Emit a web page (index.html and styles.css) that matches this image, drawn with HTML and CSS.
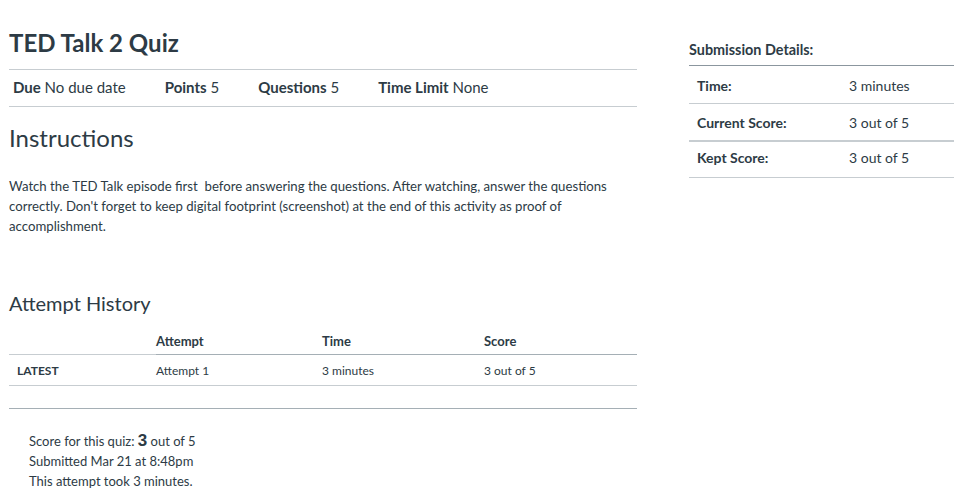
FILE: index.html
```html
<!DOCTYPE html>
<html lang="en">
<head>
<meta charset="utf-8">
<title>TED Talk 2 Quiz</title>
<link rel="stylesheet" href="styles.css">
</head>
<body>
<div class="page">
  <main class="main">
    <h1 class="title">TED Talk 2 Quiz</h1>
    <ul class="details">
      <li><span class="label">Due</span> No due date</li>
      <li><span class="label">Points</span> 5</li>
      <li><span class="label">Questions</span> 5</li>
      <li><span class="label">Time Limit</span> None</li>
    </ul>
    <h2 class="instr-title">Instructions</h2>
    <p class="instr">Watch the TED Talk episode first&nbsp; before answering the questions. After watching, answer the questions correctly. Don't forget to keep digital footprint (screenshot) at the end of this activity as proof of accomplishment.</p>

    <h2 class="history-title">Attempt History</h2>
    <table class="history">
      <thead>
        <tr><th class="blank"></th><th>Attempt</th><th>Time</th><th>Score</th></tr>
      </thead>
      <tbody>
        <tr><td class="latest">LATEST</td><td>Attempt 1</td><td>3 minutes</td><td>3 out of 5</td></tr>
      </tbody>
    </table>
    <div class="spacer"></div>

    <div class="summary">
      <div>Score for this quiz: <span class="big">3</span> out of 5</div>
      <div>Submitted Mar 21 at 8:48pm</div>
      <div>This attempt took 3 minutes.</div>
    </div>
  </main>

  <aside class="side">
    <h3 class="side-title">Submission Details:</h3>
    <table class="subm">
      <tr class="r1"><th>Time:</th><td>3 minutes</td></tr>
      <tr class="r2"><th>Current Score:</th><td>3 out of 5</td></tr>
      <tr class="r3"><th>Kept Score:</th><td>3 out of 5</td></tr>
    </table>
  </aside>
</div>
</body>
</html>
```

FILE: styles.css
```css
html, body {
  margin: 0;
  padding: 0;
  background: #ffffff;
}
body {
  font-family: Lato, "Open Sans", "Liberation Sans", sans-serif;
  color: #2d3b45;
}
.page {
  display: flex;
  align-items: flex-start;
  padding: 29px 0 0 9px;
}
.main {
  width: 628px;
}
.title {
  margin: 0 0 12px;
  font-size: 24px;
  line-height: 28px;
  font-weight: 700;
}
.details {
  list-style: none;
  margin: 0;
  padding: 7px 0 9px 4px;
  display: flex;
  gap: 39px;
  border-top: 1px solid #c7cdd1;
  border-bottom: 1px solid #c7cdd1;
  font-size: 15px;
  line-height: 20px;
}
.label {
  font-weight: 700;
}
.instr-title {
  margin: 17px 0 0;
  font-size: 24px;
  line-height: 28px;
  font-weight: 400;
}
.instr {
  margin: 24px 0 0;
  font-size: 13.2px;
  line-height: 20px;
}
.history-title {
  margin: 55px 0 0;
  font-size: 20px;
  line-height: 24px;
  font-weight: 400;
}
.history {
  margin-top: 12px;
  width: 100%;
  border-collapse: collapse;
  font-size: 12px;
}
.history th {
  text-align: left;
  font-size: 13px;
  font-weight: 700;
  height: 27px;
  padding: 0;
  border-bottom: 1px solid #a5afb5;
}
.history th.blank {
  border-bottom-color: #c7cdd1;
}
.history td {
  height: 30px;
  padding: 0;
  border-bottom: 1px solid #c7cdd1;
}
.history th:first-child,
.history td:first-child {
  width: 139px;
  padding-left: 8px;
}
.history th:nth-child(2),
.history td:nth-child(2) {
  width: 166px;
}
.history th:nth-child(3),
.history td:nth-child(3) {
  width: 162px;
}
.history td.latest {
  font-weight: 700;
}
.spacer {
  height: 22px;
  border-bottom: 1px solid #a5afb5;
}
.summary {
  margin-top: 22px;
  padding-left: 20px;
  font-size: 13px;
  line-height: 20px;
}
.big {
  font-family: "Liberation Sans", Arial, sans-serif;
  font-size: 17px;
  font-weight: 700;
}
.side {
  width: 265px;
  margin-left: 52px;
  margin-top: 11px;
}
.side-title {
  margin: 0;
  padding-bottom: 5px;
  font-size: 14.4px;
  line-height: 20px;
  font-weight: 700;
  border-bottom: 1px solid #8b969e;
}
.subm {
  width: 100%;
  border-collapse: collapse;
  font-size: 14px;
}
.subm th,
.subm td {
  text-align: left;
  padding: 0 0 0 8px;
  height: 36px;
  border-bottom: 1px solid #c7cdd1;
}
.subm th {
  width: 144px;
  font-weight: 700;
}
.subm td {
  font-weight: 400;
}
.subm .r1 th,
.subm .r1 td {
  height: 35px;
  padding-top: 2px;
}
.subm .r2 th,
.subm .r2 td {
  border-bottom-width: 2px;
}
.subm .r3 th,
.subm .r3 td {
  height: 30px;
  padding-bottom: 5px;
}
```
